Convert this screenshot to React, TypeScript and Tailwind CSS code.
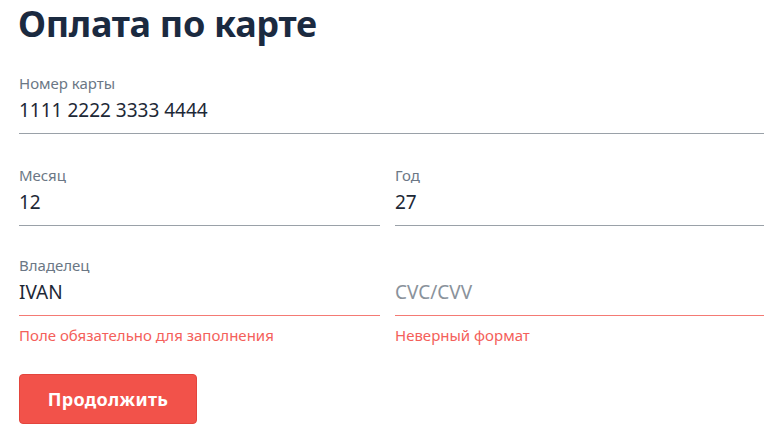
import React from "react";

function Field({
  label,
  value,
  placeholder,
  error,
  invalid,
  className = "",
}: {
  label?: string;
  value?: string;
  placeholder?: string;
  error?: string;
  invalid?: boolean;
  className?: string;
}) {
  return (
    <div className={"flex flex-col " + className}>
      <div className="text-[15px] leading-[20px] text-[#6b7785] h-[20px]">{label ?? ""}</div>
      <div
        className={
          "mt-[5px] text-[19px] leading-[24px] pb-[11px] border-b " +
          (invalid ? "border-[#f47a74]" : "border-[#9aa1a8]") +
          (value ? " text-[#1d2836]" : " text-[#8a929b]")
        }
      >
        {value || placeholder}
      </div>
      {error !== undefined && (
        <div className="mt-[9px] text-[15px] leading-[20px] text-[#f4605a]">{error}</div>
      )}
    </div>
  );
}

export default function App() {
  return (
    <div
      className="w-[783px] h-[434px] bg-white px-[19px] pt-[2px] overflow-hidden"
      style={{ fontFamily: '"Noto Sans", "Open Sans", sans-serif' }}
    >
      <h1 className="text-[36px] leading-[44px] font-bold tracking-[-0.3px] text-[#1b2a40] -ml-[1px]">
        Оплата по карте
      </h1>
      <Field className="mt-[27px]" label="Номер карты" value="1111 2222 3333 4444" />
      <div className="flex mt-[31px]">
        <Field className="w-[361px]" label="Месяц" value="12" />
        <Field className="w-[369px] ml-[15px]" label="Год" value="27" />
      </div>
      <div className="flex mt-[29px]">
        <Field
          className="w-[361px]"
          label="Владелец"
          value="IVAN"
          invalid
          error="Поле обязательно для заполнения"
        />
        <Field
          className="w-[369px] ml-[15px]"
          placeholder="CVC/CVV"
          invalid
          error="Неверный формат"
        />
      </div>
      <button className="mt-[29px] w-[178px] h-[50px] rounded-[4px] bg-[#f2524a] border border-[#e3453d] text-white text-[18px] font-bold tracking-[0.3px] flex items-center justify-center">
        Продолжить
      </button>
    </div>
  );
}
